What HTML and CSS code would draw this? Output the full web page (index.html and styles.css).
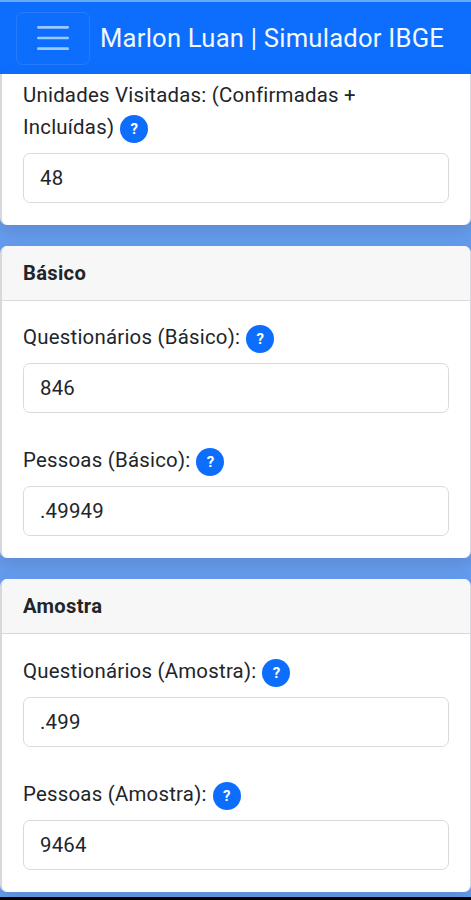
FILE: index.html
```html
<!DOCTYPE html>
<html lang="pt-BR">
<head>
<meta charset="utf-8">
<title>Marlon Luan | Simulador IBGE</title>
<link rel="stylesheet" href="styles.css">
</head>
<body>
<nav class="navbar">
  <button class="toggler" aria-label="Menu">
    <svg width="40" height="40" viewBox="0 0 30 30"><path d="M4 7h22M4 15h22M4 23h22" stroke="currentColor" stroke-width="2" stroke-linecap="round"/></svg>
  </button>
  <span class="brand">Marlon Luan | Simulador IBGE</span>
</nav>
<main>
  <section class="card card-first">
    <div class="card-body">
      <div class="field"><label>Unidades Visitadas: (Confirmadas +<br>Incluídas)<span class="help">?</span></label><input type="text" value="48"></div>
    </div>
  </section>
  <section class="card">
    <h2 class="card-header">Básico</h2>
    <div class="card-body">
      <div class="field"><label>Questionários (Básico):<span class="help">?</span></label><input type="text" value="846"></div>
      <div class="field"><label>Pessoas (Básico):<span class="help">?</span></label><input type="text" value=".49949"></div>
    </div>
  </section>
  <section class="card card-last">
    <h2 class="card-header">Amostra</h2>
    <div class="card-body">
      <div class="field"><label>Questionários (Amostra):<span class="help">?</span></label><input type="text" value=".499"></div>
      <div class="field"><label>Pessoas (Amostra):<span class="help">?</span></label><input type="text" value="9464"></div>
    </div>
  </section>
</main>
<footer class="system-bar"></footer>
</body>
</html>
```
FILE: styles.css
```css
* { box-sizing: border-box; }
body {
  margin: 0;
  height: 900px;
  overflow: hidden;
  display: flex;
  flex-direction: column;
  background: #659df0;
  color: #212529;
  font: 20.4px/32px Roboto, sans-serif;
  letter-spacing: 0.23px;
}
.navbar {
  flex: none;
  height: 74px;
  padding: 0 16px;
  display: flex;
  align-items: center;
  background: #0d6efd;
  border-top: 2px solid #69aaf4;
  color: #f2f8ff;
}
.toggler {
  width: 74px;
  height: 53px;
  margin: 0 10px 0 0;
  padding: 0;
  display: flex;
  align-items: center;
  justify-content: center;
  background: none;
  border: 1px solid #267cfc;
  border-radius: 7px;
  color: #9bcaff;
}
.brand { font-size: 25.6px; white-space: nowrap; }
main { flex: 1; min-height: 0; }
.card {
  margin-bottom: 21px;
  overflow: hidden;
  background: #fff;
  border: solid #d5d8dc;
  border-width: 0 1px 0 2px;
  border-radius: 7px;
  box-shadow: 0 8px 16px rgba(70, 80, 110, .22);
}
.card-first { border-radius: 0 0 7px 7px; }
.card-first .card-body { padding-top: 5px; }
.card-last { margin-bottom: 0; }
.card-last .card-body { padding-top: 21px; }
.card-header {
  height: 55px;
  margin: 0;
  padding: 0 21px;
  background: #f7f7f7;
  border-bottom: 1px solid #d8d8d8;
  font-size: 20.2px;
  font-weight: 700;
  line-height: 55px;
  letter-spacing: 0.3px;
}
.card-body { padding: 20px 21px 22px; }
.field + .field { margin-top: 31px; }
label { display: block; margin-bottom: 10px; white-space: nowrap; }
.help {
  display: inline-flex;
  align-items: center;
  justify-content: center;
  width: 28px;
  height: 28px;
  margin-left: 6px;
  vertical-align: middle;
  border-radius: 50%;
  background: #0d6efd;
  color: #fff;
  font-size: 15px;
  font-weight: 700;
  line-height: 28px;
  letter-spacing: 0;
}
input {
  display: block;
  width: 100%;
  height: 50px;
  padding: 0 16px;
  background: #fff;
  border: 1px solid #d6dbdf;
  border-radius: 7px;
  color: #212529;
  font: inherit;
  letter-spacing: 0.2px;
}
.system-bar { flex: none; height: 3px; background: #000; }
```
